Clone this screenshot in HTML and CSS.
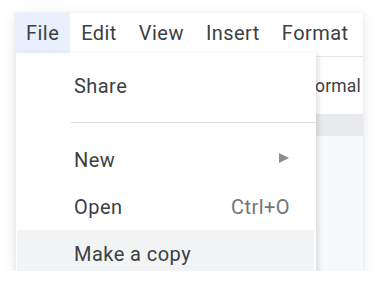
FILE: index.html
```html
<!DOCTYPE html>
<html>
<head>
<meta charset="utf-8">
<link rel="stylesheet" href="styles.css">
</head>
<body>
<div class="card">
  <div class="menubar">
    <span class="mb-item active">File</span>
    <span class="mb-item">Edit</span>
    <span class="mb-item">View</span>
    <span class="mb-item">Insert</span>
    <span class="mb-item">Format</span>
  </div>
  <div class="doc">
    <div class="toolbar"><span class="style-name">Normal</span></div>
    <div class="ruler"></div>
    <div class="page-area"></div>
  </div>
  <div class="dropdown">
    <div class="row"><span class="label">Share</span></div>
    <div class="sep"></div>
    <div class="row"><span class="label">New</span><span class="arrow"></span></div>
    <div class="row"><span class="label">Open</span><span class="shortcut">Ctrl+O</span></div>
    <div class="row hover"><span class="label">Make a copy</span></div>
  </div>
</div>
</body>
</html>
```
FILE: styles.css
```css
html, body {
  margin: 0;
  padding: 0;
  background: #ffffff;
}
body {
  font-family: Roboto, "Liberation Sans", sans-serif;
  color: #3c4043;
  letter-spacing: 0.45px;
}
.card {
  position: relative;
  margin: 13px 0 0 15px;
  width: 348px;
  height: 258px;
  overflow: hidden;
  background: #ffffff;
  box-shadow: 0 3px 12px rgba(0,0,0,0.10), 0 0 2px rgba(0,0,0,0.07);
  display: flex;
  flex-direction: column;
}
.menubar {
  height: 40px;
  display: flex;
  align-items: stretch;
  flex: none;
}
.mb-item {
  display: flex;
  align-items: center;
  padding: 0 11px;
  font-size: 20px;
  color: #3c4043;
}
.mb-item.active {
  background: #e8f0fe;
  padding-bottom: 1px;
}
.doc {
  flex: 1;
  display: flex;
  flex-direction: column;
  margin-top: 3px;
  border-top: 1px solid #e3e5e8;
}
.toolbar {
  height: 57px;
  display: flex;
  align-items: center;
  justify-content: flex-end;
  padding-right: 2px;
  background: #ffffff;
  flex: none;
}
.style-name {
  font-size: 17.5px;
  letter-spacing: 0.2px;
  color: #3c4043;
}
.ruler {
  height: 22px;
  background: #e8eaed;
  flex: none;
}
.page-area {
  flex: 1;
  background: #f8f9fa;
}
.dropdown {
  position: absolute;
  top: 40px;
  left: 0;
  width: 301px;
  height: 240px;
  background: #ffffff;
  padding-top: 9px;
  box-sizing: border-box;
  box-shadow: 2px 2px 6px rgba(0,0,0,0.14);
  border-left: 1px solid #eceef0;
}
.row {
  height: 47px;
  margin: 0 2px 0 1px;
  padding: 0 24px 0 57px;
  display: flex;
  align-items: center;
  justify-content: space-between;
  font-size: 20px;
  color: #3c4043;
}
.row.hover {
  background: #f1f3f4;
  height: 48px;
}
.sep {
  height: 1px;
  background: #dadce0;
  margin: 13px 0 13px 55px;
}
.shortcut {
  font-size: 20px;
  color: #70757a;
}
.arrow {
  width: 0;
  height: 0;
  border-top: 5.5px solid transparent;
  border-bottom: 5.5px solid transparent;
  border-left: 10px solid #8a8e93;
  margin-right: 1px;
  margin-top: -4px;
}
```
